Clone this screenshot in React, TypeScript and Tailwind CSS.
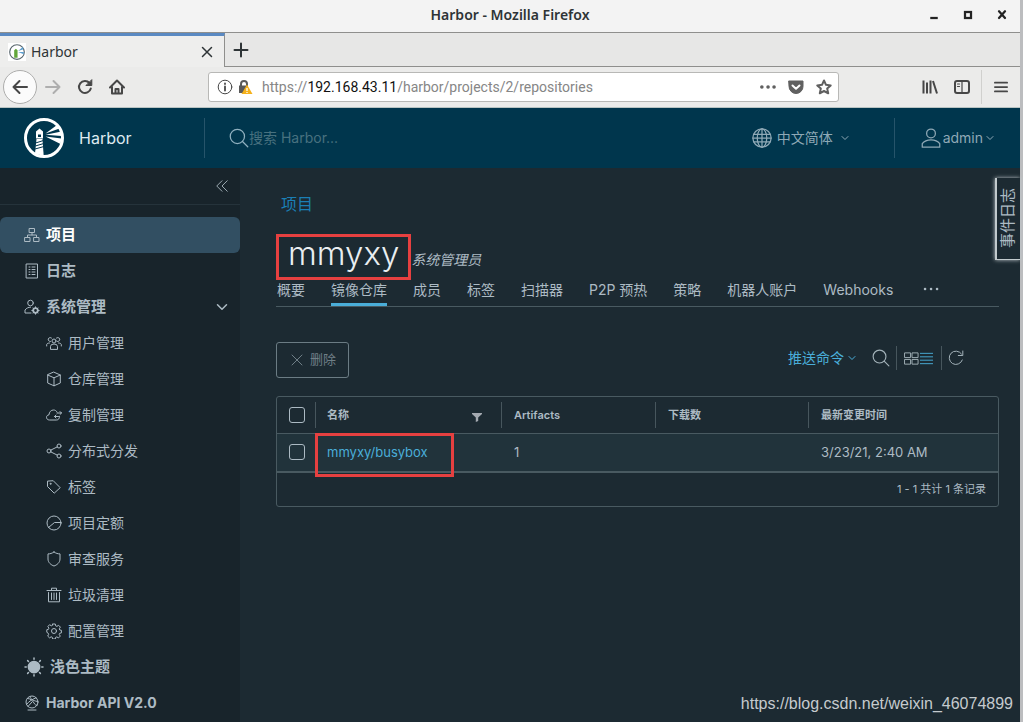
import React from 'react';

type IconProps = { className?: string; strokeWidth?: number; children: React.ReactNode };

const Icon = ({ className = 'w-4 h-4', strokeWidth = 1, children }: IconProps) => (
  <svg
    viewBox="0 0 16 16"
    className={`shrink-0 ${className}`}
    fill="none"
    stroke="currentColor"
    strokeWidth={strokeWidth}
    strokeLinecap="round"
    strokeLinejoin="round"
    aria-hidden="true"
  >
    {children}
  </svg>
);

const Chevron = ({ className = 'w-2 h-2' }: { className?: string }) => (
  <Icon className={className} strokeWidth={2}>
    <path d="M2 5l6 6 6-6" />
  </Icon>
);

const icons = {
  projects: (
    <>
      <rect x="5.5" y="1.5" width="5" height="4" />
      <rect x="1" y="10.5" width="5" height="4" />
      <rect x="10" y="10.5" width="5" height="4" />
      <path d="M8 5.5v2.5M3.5 10.5V8h9v2.5" />
    </>
  ),
  logs: (
    <>
      <rect x="2.5" y="1" width="11" height="14" />
      <path d="M5 4h1M5 6.5h1M5 9h1M5 11.5h1M8 4h3M8 6.5h3M8 9h3M8 11.5h3" />
    </>
  ),
  admin: (
    <>
      <circle cx="6.5" cy="4" r="2.8" />
      <path d="M7 14H1v-3c1.5-2 3.5-2.8 5.5-2.8" />
      <circle cx="11.5" cy="11.5" r="2.3" strokeWidth="1.8" />
      <path d="M11.5 7.8v1M11.5 14.2v1M7.8 11.5h1M14.2 11.5h1M9 9l.6.6M14 14l-.6-.6M14 9l-.6.6M9 14l.6-.6" />
    </>
  ),
  users: (
    <>
      <circle cx="8" cy="6" r="2" />
      <path d="M4.5 14v-2.5a3.5 2.5 0 0 1 7 0V14z" />
      <path d="M4.5 6.5a2 2 0 1 1 1-3.5M11.5 6.5a2 2 0 1 0-1-3.5M.7 11V9.5C1 8.5 2 8 3.5 8M15.3 11V9.5C15 8.5 14 8 12.5 8" />
    </>
  ),
  cube: <path d="M8 1.2l6.3 2.8v8L8 14.8 1.7 12V4zM1.7 4L8 6.8 14.3 4M8 6.8v8" />,
  replicate: (
    <>
      <path d="M13.5 9.5c0 2-1 3.5-3 3.5H3.5C1.5 13 .5 11.7.5 10.3.5 9 1.5 8 3 7.8 3.2 5 5 3 7.5 3c1.500 0 2.700.6 3.500 2" />
      <path d="M8.5 9.5h4M10 8l-1.5 1.5L10 11M11 6h4.500M14 4.500L15.500 6 14 7.500" />
    </>
  ),
  share: (
    <>
      <circle cx="3" cy="8" r="2" />
      <circle cx="13" cy="3" r="2" />
      <circle cx="13" cy="13" r="2" />
      <path d="M4.8 7.1l6.4-3.2M4.8 8.9l6.4 3.2" />
    </>
  ),
  tag: (
    <>
      <path d="M1.5 2.5v5l6.7 6.7 6-5.5L7.5 2z" />
      <circle cx="4.5" cy="4.8" r=".5" />
    </>
  ),
  quota: (
    <>
      <circle cx="8" cy="8" r="7" />
      <path d="M2.5 12.5L8.5 7.5h6.5" />
    </>
  ),
  shield: <path d="M8 1c2 1.4 4 1.9 6 1.9V8c0 3.5-3 6-6 7-3-1-6-3.5-6-7V2.9C4 2.9 6 2.4 8 1z" />,
  trash: <path d="M1 3.5h14M5.5 3.5V1.2h5v2.3M2.5 5.5v9.3h11V5.5M5.5 6v6.5M8 6v6.5M10.5 6v6.5" />,
  gear: (
    <>
      <circle cx="8" cy="8" r="2.5" />
      <path d="M6.7 1h2.6l.4 1.9 1.2.5 1.7-1.1 1.8 1.8-1.1 1.7.5 1.2 1.6.3v2.6l-1.7.4-.5 1.1 1.1 1.7-1.8 1.8-1.7-1-1.2.5-.3 1.6H6.7l-.4-1.7-1.1-.5-1.7 1-1.8-1.700 1-1.800-.5-1.100L.8 9.300V6.700l1.600-.3.5-1.200-1-1.700 1.700-1.800 1.700 1.100 1.100-.5z" />
    </>
  ),
  api: (
    <>
      <circle cx="8" cy="7" r="6" />
      <path d="M3.5 3.5c3 0 5 2 6.5 4.5 1 1.8 2 2.8 3.5 2M12 2.8C9 4 5 6 2.5 9.5M6 1.5c0 2 2 4 7.5 5M4 11.5L8 7M4 15h8" />
    </>
  ),
  search: (
    <>
      <circle cx="6.7" cy="6.7" r="5.7" />
      <path d="M10.8 10.8L15 15" />
    </>
  ),
  globe: (
    <>
      <circle cx="8" cy="8" r="7.3" />
      <ellipse cx="8" cy="8" rx="3.8" ry="7.3" />
      <path d="M8 .7v14.6M1.5 5h13M1.5 11h13M.7 8h14.6" />
    </>
  ),
  user: (
    <>
      <circle cx="8" cy="4.3" r="3.5" />
      <path d="M1 15.3v-2.8c1.5-2 4-3 7-3s5.5 1 7 3v2.8z" />
    </>
  ),
};

const adminItems = [
  { label: '用户管理', icon: icons.users },
  { label: '仓库管理', icon: icons.cube },
  { label: '复制管理', icon: icons.replicate },
  { label: '分布式分发', icon: icons.share },
  { label: '标签', icon: icons.tag },
  { label: '项目定额', icon: icons.quota },
  { label: '审查服务', icon: icons.shield },
  { label: '垃圾清理', icon: icons.trash },
  { label: '配置管理', icon: icons.gear },
];

const tabs = ['概要', '镜像仓库', '成员', '标签', '扫描器', 'P2P 预热', '策略', '机器人账户', 'Webhooks'];

const HarborLogo = () => (
  <svg viewBox="0 0 40 40" className="w-10 h-10 shrink-0" aria-hidden="true">
    <circle cx="20" cy="20" r="18.5" fill="none" stroke="#fff" strokeWidth="3" />
    <path d="M15.5 10.5l3.5 3v1.5h-7v-1.5z" fill="#fff" />
    <path d="M12 15h7v5.5h-7z" fill="#fff" />
    <path d="M14 16.5h3v2.5h-3z" fill="#00364d" />
    <path d="M12.5 21h6l1.2 17-8.7-2.5z" fill="#fff" />
    <path d="M11.5 25l8-2.500M11.300 28l8.500-2.500M11 31l9-2.500" stroke="#00364d" strokeWidth="1" />
    <path d="M21.5 15.5L33 7l2.500 3.500zM21.500 16.800l16-3.300v4.500zM21.500 18.500l16 2-1 5.500z" fill="#fff" />
  </svg>
);

const BrowserChrome = () => (
  <div className="font-['Noto_Sans',sans-serif] text-[#2e3436]">
    <div className="grid h-[33px] grid-cols-[1fr_auto_1fr] items-center border-b border-[#8f8f8d] bg-[#f3f3f3]">
      <span />
      <h1 className="pb-0.5 text-sm font-semibold">Harbor - Mozilla Firefox</h1>
      <div className="flex justify-end gap-4 pr-[9px] pb-0.5 text-[#222]">
        <button aria-label="最小化" className="grid h-[18px] w-[18px] place-items-center">
          <Icon className="w-3 h-3" strokeWidth={3}><path d="M3 12h10" strokeLinecap="butt" /></Icon>
        </button>
        <button aria-label="最大化" className="grid h-[18px] w-[18px] place-items-center">
          <Icon className="w-3 h-3" strokeWidth={3}><rect x="4" y="4" width="8" height="8" strokeLinejoin="miter" /></Icon>
        </button>
        <button aria-label="关闭窗口" className="grid h-[18px] w-[18px] place-items-center">
          <Icon className="w-3 h-3" strokeWidth={3}><path d="M4 3l8 9M12 3l-8 9" /></Icon>
        </button>
      </div>
    </div>

    <div className="flex h-[34px] bg-[#e7e7e6]">
      <div className="flex w-[225px] items-center border-t-3 border-r border-t-[#5a89c2] border-r-[#8f8f8d] bg-[#eeeeed] pr-[7px] pl-2">
        <svg viewBox="0 0 16 16" className="h-[18px] w-[18px] bg-white" aria-hidden="true">
          <circle cx="8" cy="8" r="6.5" fill="none" stroke="#58666d" />
          <path d="M5.5 6.5L7 5l1.500 1.500V13h-3z" fill="#62a63a" />
          <path d="M9 7l4-3.5.8 2zM9 8h5v2z" fill="#5d9fd0" />
        </svg>
        <span className="ml-[5px] text-sm">Harbor</span>
        <button aria-label="关闭标签页" className="ml-auto p-1">
          <Icon className="w-3 h-3" strokeWidth={2}><path d="M2 2l12 12M14 2L2 14" /></Icon>
        </button>
      </div>
      <div className="flex flex-1 items-center border-b border-[#8f8f8d] pl-2">
        <button aria-label="新建标签页">
          <Icon strokeWidth={2}><path d="M8 1.5v13M1.5 8h13" /></Icon>
        </button>
      </div>
    </div>

    <div className="flex h-[41px] items-center border-b border-[#b9c4c3] bg-[#ebebea] pr-1 pl-[3px] text-[#474747]">
      <button aria-label="后退" className="grid h-[34px] w-[34px] shrink-0 place-items-center rounded-full border border-[#adadac] bg-[#fbfbfb]">
        <Icon strokeWidth={2}><path d="M15 8H1.5M7.5 2L1.5 8l6 6" /></Icon>
      </button>
      <div className="ml-2 flex items-center gap-4">
        <button aria-label="前进" className="text-[#aeaeae]">
          <Icon strokeWidth={2}><path d="M1 8h13.5M8.5 2l6 6-6 6" /></Icon>
        </button>
        <button aria-label="刷新">
          <Icon strokeWidth={2}>
            <path d="M13.8 9.5A6 6 0 1 1 12.500 4" />
            <path d="M14.8 1v5.5H9.3z" fill="currentColor" strokeWidth="1" />
          </Icon>
        </button>
        <button aria-label="主页">
          <Icon strokeWidth={2}>
            <path d="M1 8.5L8 1.5l7 7M3 8v6.5h10V8" />
            <path d="M6.5 14V10h3v4" />
          </Icon>
        </button>
      </div>
      <div className="ml-[83px] flex h-[30px] flex-1 items-center rounded-[3px] border border-[#b8b8b6] bg-white pr-[6px] pl-2">
        <Icon>
          <circle cx="8" cy="8" r="6.8" />
          <path d="M8 7.5v4M8 4.5v.5" strokeWidth="1.8" />
        </Icon>
        <svg viewBox="0 0 16 16" className="ml-1 h-4 w-4 shrink-0" aria-hidden="true">
          <path d="M4 7V5a3 3 0 0 1 6 0v2" fill="none" stroke="#5a5a5a" strokeWidth="2" />
          <path d="M2 6.5h9V14H2z" fill="#5a5a5a" />
          <path d="M10 5.5l5.5 9.5h-11z" fill="#f5b11b" />
          <path d="M10 9v3M10 13v1" stroke="#fff" strokeWidth="1.3" />
        </svg>
        <div className="ml-[9px] flex-1 font-['Roboto',sans-serif] text-sm text-[#868686]">
          https://<span className="text-[#111]">192.168.43.11</span>/harbor/projects/2/repositories
        </div>
        <div className="flex gap-3 text-[#606060]">
          <button aria-label="页面操作">
            <Icon><path d="M1.8 8h.1M8 8h.1M14 8h.1" strokeWidth="3.5" /></Icon>
          </button>
          <button aria-label="保存到 Pocket">
            <Icon>
              <path d="M1 2h14v5.5a7 7 0 0 1-14 0z" fill="currentColor" />
              <path d="M4.5 6.5L8 9.8l3.5-3.3" stroke="#fff" strokeWidth="2" />
            </Icon>
          </button>
          <button aria-label="添加书签">
            <Icon strokeWidth={2}><path d="M8 1.5l2 4.3 4.7.6-3.5 3.2 1 4.7L8 12l-4.2 2.3 1-4.7L1.3 6.4 6 5.8z" /></Icon>
          </button>
        </div>
      </div>
      <div className="ml-[83px] flex items-center gap-4">
        <button aria-label="书库">
          <Icon strokeWidth={2}><path d="M1.5 1.5v13M5 3.5v11M8.5 1.5v13M11 2l4 12.5" strokeLinecap="butt" /></Icon>
        </button>
        <button aria-label="侧栏">
          <Icon strokeWidth={2}>
            <rect x="1" y="2" width="14" height="12" rx="2" />
            <path d="M8 2v12M3.5 5h2M3.5 7.5h2" strokeWidth="1.2" />
          </Icon>
        </button>
      </div>
      <div className="ml-[11px] flex h-[34px] items-center border-l border-[#d0d0ce] pr-2 pl-3">
        <button aria-label="菜单">
          <Icon className="w-3.5 h-3.5" strokeWidth={2}><path d="M1 3h14M1 8h14M1 13h14" /></Icon>
        </button>
      </div>
    </div>
  </div>
);

const Header = () => (
  <header className="flex h-[60px] items-center bg-[#00364d] text-[#8fa9b6]">
    <div className="flex h-10 w-[205px] items-center border-r border-[#26546a] pl-6">
      <HarborLogo />
      <span className="ml-[15px] text-base text-[#dfeaf0]">Harbor</span>
    </div>
    <label className="ml-6 flex flex-1 items-center text-[#8fb0bf]">
      <Icon className="w-5 h-5">{icons.search}</Icon>
      <input
        type="text"
        aria-label="搜索"
        placeholder="搜索 Harbor..."
        className="w-full bg-transparent text-sm outline-none placeholder:text-[#48717f]"
      />
    </label>
    <button className="flex h-10 w-[143px] items-center border-r border-[#26546a] text-sm">
      <Icon className="w-5 h-5">{icons.globe}</Icon>
      <span className="mr-2 ml-[5px]">中文简体</span>
      <Chevron />
    </button>
    <button className="ml-[26px] flex items-center pr-[26px] text-sm">
      <Icon className="w-5 h-5">{icons.user}</Icon>
      <span className="mr-[3px] ml-[2px]">admin</span>
      <Chevron />
    </button>
  </header>
);

const Sidebar = () => (
  <nav className="w-60 shrink-0 bg-[#18242b] text-[#adbbc4]">
    <div className="flex h-[37px] items-center justify-end border-b border-[#25333b] pr-[11px]">
      <button aria-label="收起">
        <Icon className="w-3.5 h-3.5"><path d="M8 2L2 8l6 6M14 2L8 8l6 6" /></Icon>
      </button>
    </div>
    <ul className="mt-3">
      <li>
        <a href="#projects" className="flex h-9 items-center gap-1.5 rounded-md bg-[#324f62] pl-6 text-[15px] font-bold text-white">
          <Icon className="w-4 h-4 text-[#adbbc4]">{icons.projects}</Icon>
          项目
        </a>
      </li>
      <li>
        <a href="#logs" className="flex h-9 items-center gap-1.5 pl-6 text-[15px] font-bold">
          <Icon>{icons.logs}</Icon>
          日志
        </a>
      </li>
      <li>
        <button className="flex h-9 w-full items-center gap-1.5 pr-3 pl-6 text-[15px] font-bold">
          <Icon>{icons.admin}</Icon>
          系统管理
          <Chevron className="ml-auto w-3 h-3" />
        </button>
        <ul>
          {adminItems.map((item) => (
            <li key={item.label}>
              <a href="#admin" className="flex h-9 items-center gap-1.5 pl-[46px] text-sm">
                <Icon>{item.icon}</Icon>
                {item.label}
              </a>
            </li>
          ))}
        </ul>
      </li>
      <li>
        <button className="flex h-9 items-center gap-1.5 pl-6 text-[15px] font-bold">
          <Icon className="w-5 h-5" strokeWidth={1.2}>
            <circle cx="8" cy="8" r="4.5" fill="currentColor" />
            <path d="M8 .8v1M8 14.2v1M.8 8h1M14.2 8h1M2.9 2.9l.7.7M12.4 12.4l.7.7M13.1 2.9l-.7.7M3.6 12.4l-.7.7" />
          </Icon>
          浅色主题
        </button>
      </li>
      <li>
        <a href="#api" className="flex h-9 items-center gap-1.5 pl-6 text-sm font-bold">
          <Icon>{icons.api}</Icon>
          Harbor API V2.0
        </a>
      </li>
    </ul>
  </nav>
);

const Toolbar = () => (
  <div className="mt-[35px] flex items-center justify-between">
    <button disabled className="flex h-9 items-center gap-[5px] rounded-[3px] border border-[#6b7c84] px-3 text-[13px] text-[#6f7f87]">
      <Icon><path d="M3 3l10 10M13 3L3 13" /></Icon>
      删除
    </button>
    <div className="flex items-center pr-[35px] pb-1 text-[#a3b2b9]">
      <button className="mr-4 flex items-center gap-1 text-sm text-[#4aaed9]">
        推送命令
        <Chevron />
      </button>
      <button aria-label="搜索仓库" className="mr-[6px]">
        <Icon className="w-[18px] h-[18px]">{icons.search}</Icon>
      </button>
      <div className="flex h-6 items-center border-x border-[#47565d] px-[7px]">
        <button aria-label="卡片视图">
          <Icon className="w-[15px] h-[15px]">
            <path d="M1 2h6v5H1zM9 2h6v5H9zM1 9h6v5H1zM9 9h6v5H9z" />
          </Icon>
        </button>
        <button aria-label="列表视图" className="text-[#4aaed9]">
          <Icon className="w-[15px] h-[15px]"><path d="M1.5 2.5h13M1.5 6.2h13M1.5 9.8h13M1.5 13.5h13" /></Icon>
        </button>
      </div>
      <button aria-label="刷新列表" className="ml-[6px]">
        <Icon><path d="M14.3 10A6.7 6.7 0 1 1 13.5 4M14.8 1v4.5h-4.5" /></Icon>
      </button>
    </div>
  </div>
);

const headCell = 'h-9 p-0 text-left text-[11px] font-semibold';
const headInner = 'flex h-[26px] items-center border-l border-[#47565d] pl-3';

const RepositoryTable = () => (
  <div className="mt-[18px] rounded-[3px] border border-[#495a61]">
    <table className="w-full table-fixed border-collapse text-[#adbbc4]">
      <colgroup>
        <col className="w-[38px]" />
        <col className="w-[186px]" />
        <col className="w-[154px]" />
        <col className="w-[153px]" />
        <col />
      </colgroup>
      <thead>
        <tr>
          <th className="h-9 p-0 pl-3">
            <input type="checkbox" aria-label="全选" className="block h-4 w-4 appearance-none rounded-[3px] border border-[#acbac3]" />
          </th>
          <th className={headCell}>
            <div className="flex h-[26px] items-center justify-between border-l border-[#47565d] pr-[19px] pl-[11px]">
              名称
              <button aria-label="筛选" className="pt-1 text-[#a3a9b0]">
                <svg viewBox="0 0 10 10" className="h-2.5 w-2.5" fill="currentColor" aria-hidden="true">
                  <path d="M0 1h10v1L6.2 5.500V9L3.800 10V5.500L0 2z" />
                </svg>
              </button>
            </div>
          </th>
          <th className={headCell}><div className={headInner}>Artifacts</div></th>
          <th className={headCell}><div className={headInner}>下载数</div></th>
          <th className={headCell}><div className={headInner}>最新变更时间</div></th>
        </tr>
      </thead>
      <tbody>
        <tr className="border-t border-b-2 border-[#495a61] bg-[#21333b] text-[13px]">
          <td className="h-[39px] p-0 pl-3">
            <input type="checkbox" aria-label="选择 mmyxy/busybox" className="block h-4 w-4 appearance-none rounded-[3px] border border-[#acbac3]" />
          </td>
          <td className="relative p-0 pl-3">
            <a href="#busybox" className="text-[#4aaed9]">mmyxy/busybox</a>
            <span className="absolute -top-px left-0 h-11 w-[139px] border-3 border-[#e64040]" />
          </td>
          <td className="p-0 pl-[13px]">1</td>
          <td />
          <td className="p-0 pl-[13px]">3/23/21, 2:40 AM</td>
        </tr>
      </tbody>
    </table>
    <div className="flex h-[33px] items-center justify-end pr-3 text-[11px] text-[#adbbc4]">1 - 1 共计 1 条记录</div>
  </div>
);

const App = () => (
  <div className="relative flex min-h-screen flex-col border-r-3 border-[#bcbdbf] font-['Inter','Noto_Sans_CJK_SC',sans-serif]">
    <BrowserChrome />
    <Header />
    <div className="flex flex-1 bg-[#1c2a32]">
      <Sidebar />
      <main className="relative min-w-0 flex-1 pt-6 pr-[21px] pl-9 text-[#adbbc4]">
        <a href="#projects" className="ml-[5px] text-base text-[#1b7fb5]">项目</a>
        <div className="mt-[18px] flex items-end">
          <h2 className="h-[46px] border-3 border-[#e64040] px-[9px] text-[33px] leading-8 font-light text-[#e9eef1]">mmyxy</h2>
          <em className="mb-2.5 text-sm">系统管理员</em>
        </div>
        <div className="flex h-[27px] gap-[26px] border-b border-[#495a61] pl-px text-sm">
          {tabs.map((tab) => (
            <button
              key={tab}
              className={tab === '镜像仓库' ? 'border-b-3 border-[#4aaed9] pb-1 whitespace-nowrap' : 'border-b-3 border-transparent pb-1 whitespace-nowrap'}
            >
              {tab}
            </button>
          ))}
          <button aria-label="更多" className="ml-1 pb-2">
            <Icon><path d="M2 8h.1M8 8h.1M14 8h.1" strokeWidth="2.5" /></Icon>
          </button>
        </div>
        <Toolbar />
        <RepositoryTable />
        <button className="absolute top-2.5 right-0 flex h-[82px] w-[25px] items-center justify-center border-b border-l-2 border-[#c2cacd] bg-[#1c2a32] text-[15px] shadow-[0_0_4px_#c2cacd]">
          <span className="rotate-180 [writing-mode:vertical-rl] [text-orientation:sideways]">事件日志</span>
        </button>
      </main>
    </div>
    <div className="absolute right-[7px] bottom-1.5 font-['Liberation_Sans',sans-serif] text-base text-[#c5cace]">
      https://blog.csdn.net/weixin_46074899
    </div>
  </div>
);

export default App;
